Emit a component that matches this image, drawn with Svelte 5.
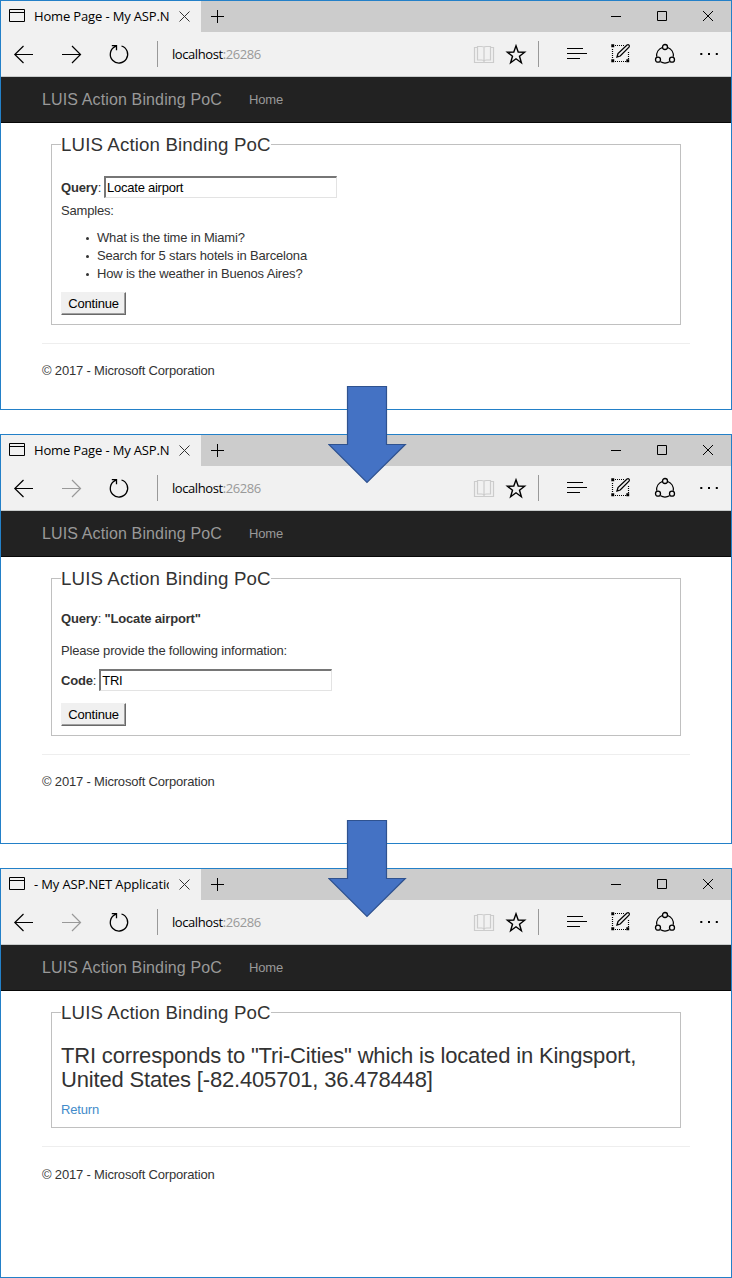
<script>
  const pages = [
    { title: 'Home Page - My ASP.N', kind: 'query', forward: true },
    { title: 'Home Page - My ASP.N', kind: 'code', forward: false },
    { title: '- My ASP.NET Application', kind: 'result', forward: false }
  ];
  const samples = [
    'What is the time in Miami?',
    'Search for 5 stars hotels in Barcelona',
    'How is the weather in Buenos Aires?'
  ];
</script>

<main>
  {#each pages as page, i}
    <section class="window">
      <div class="tabs">
        <div class="tab">
          <svg class="page-icon" width="16" height="13" viewBox="0 0 16 13"><path d="M.5.5h15v12H.5zM1 3.500h14" /></svg>
          <span class="title">{page.title}</span>
          <svg class="tab-close" width="11" height="11" viewBox="0 0 11 11"><path d="M.5.5l10 10M10.500.5l-10 10" /></svg>
        </div>
        <svg class="plus" width="13" height="13" viewBox="0 0 13 13"><path d="M6.500 0v13M0 6.500h13" /></svg>
        <div class="controls">
          <svg width="10" height="10" viewBox="0 0 10 10"><path d="M0 5.500h10" /></svg>
          <svg width="10" height="10" viewBox="0 0 10 10"><path d="M.5.5h9v9h-9z" /></svg>
          <svg width="10" height="10" viewBox="0 0 10 10"><path d="M0 0l10 10M10 0l-10 10" /></svg>
        </div>
      </div>

      <div class="toolbar">
        <svg class="icon" viewBox="0 0 24 24"><path d="M2.500 12.500H21M11.500 4l-8.700 8.500 8.700 8.500" /></svg>
        <svg class="icon forward" class:faded={!page.forward} viewBox="0 0 24 24"><path d="M2 12.500h18.500M12 4l8.500 8.500-8.500 8.500" /></svg>
        <svg class="icon refresh" viewBox="0 0 24 24"><path d="M14.500 4a8.700 8.700 0 1 1-6.500.6L9.500 3.600M4.800 3.600h4.700v4.700" /></svg>
        <i class="rule first"></i>
        <span class="url">localhost<em>:26286</em></span>
        <svg class="icon book" viewBox="0 0 24 24"><path d="M5.500 5.500H2.500v15h19v-15h-3M5.500 4.500h4q2.500 0 2.500 1.200 0-1.200 2.500-1.200h4v13.500h-4q-2.500 0-2.500 1.500 0-1.500-2.500-1.500h-4zM12 6v14" /></svg>
        <svg class="icon star" viewBox="0 0 24 24"><path d="M12 3.800l2.200 6.300 6.400.1-5.100 4 1.900 6.500-5.400-3.900-5.400 3.900 1.900-6.500-5.100-4 6.400-.1z" /></svg>
        <i class="rule second"></i>
        <svg class="icon hub" viewBox="0 0 24 24"><path d="M2 6.500h16M2 11.500h20M2 16.500h13" /></svg>
        <svg class="icon note" viewBox="0 0 24 24">
          <path class="dots" d="M6 3.500h9M3.500 7v10M6 19.500h11M19.500 10v7" />
          <path class="corners" d="M3 3h1.500v1.500H3zM3 18h1.500v1.500H3zM18 18h1.500v1.500H18z" />
          <path class="pen" d="M8 15l1-3.400 9-8.600q1.200-.8 2 .1t0 2L11.200 14z" />
        </svg>
        <svg class="icon share" viewBox="0 0 24 24">
          <path d="M9.300 5.500a8.800 8.800 0 0 0-5.600 9.200M14.700 5.500a8.800 8.800 0 0 1 5.600 9.200M7.500 19.800q4.500 2.500 9 0" />
          <circle cx="12" cy="5" r="2.500" /><circle cx="5" cy="17.700" r="2.500" /><circle cx="19" cy="17.700" r="2.500" />
        </svg>
        <svg class="icon more" viewBox="0 0 24 24"><path d="M3.300 12h2M11 12h2M18.800 12h2" /></svg>
      </div>

      <nav>
        <span class="brand">LUIS Action Binding PoC</span>
        <span class="home">Home</span>
      </nav>

      <div class="body">
        <fieldset>
          <legend>LUIS Action Binding PoC</legend>
          {#if page.kind === 'query'}
            <div class="field first-field"><span><b>Query</b>:</span><input value="Locate airport" /></div>
            <p class="samples">Samples:</p>
            <ul>
              {#each samples as s}<li>{s}</li>{/each}
            </ul>
            <button>Continue</button>
          {:else if page.kind === 'code'}
            <p class="asked"><b>Query</b>: <b>"Locate airport"</b></p>
            <p class="please">Please provide the following information:</p>
            <div class="field code-field"><span><b>Code</b>:</span><input value="TRI" /></div>
            <button class="lower">Continue</button>
          {:else}
            <h3>TRI corresponds to "Tri-Cities" which is located in Kingsport,<br />United States [-82.405701, 36.478448]</h3>
            <p class="return">Return</p>
          {/if}
        </fieldset>
        <hr />
        <footer class:last={page.kind === 'result'}>© 2017 - Microsoft Corporation</footer>
      </div>
      {#if i < 2}
        <svg class="arrow" width="80" height="98" viewBox="0 0 80 98"><path d="M19.500.5h39v58h18.800L39 96.500.8 58.500h18.700z" /></svg>
      {/if}
    </section>
  {/each}
</main>

<style>
  :global(body) { background: #fff; }
  main {
    width: 732px;
    display: flex;
    flex-direction: column;
    gap: 24px;
    font: 13px/18px "Liberation Sans", Arial, sans-serif;
    letter-spacing: -.18px;
    color: #333;
  }
  .window {
    position: relative;
    box-sizing: border-box;
    height: 410px;
    border: 1px solid #2380c8;
    background: #fff;
  }
  svg { fill: none; stroke: #000; stroke-width: 1; flex: none; display: block; }
  .tabs { display: flex; align-items: center; height: 31px; background: #ccc; }
  .tab {
    display: flex;
    align-items: center;
    box-sizing: border-box;
    width: 200px;
    height: 31px;
    padding: 0 0 1px 8px;
    background: #f1f1f1;
    color: #000;
    font: 13px/20px "Open Sans", "Noto Sans", sans-serif;
  }
  .page-icon { margin-right: 9px; margin-top: -1px; }
  .title { width: 135px; overflow: hidden; white-space: nowrap; letter-spacing: -.15px; margin-right: 10px; }
  .tab-close { stroke: #333; }
  .plus { margin-left: 10px; }
  .controls { display: flex; align-items: flex-start; height: 11px; gap: 36px; margin-left: auto; margin-right: 18px; }
  .controls svg { overflow: visible; }
  .toolbar {
    display: flex;
    align-items: center;
    box-sizing: border-box;
    height: 45px;
    padding: 0 10px 0 11px;
    background: #f1f1f1;
    border-bottom: 1px solid #c9cccc;
  }
  .icon { width: 24px; height: 24px; stroke-width: 1.2; }
  .forward { margin-left: 24px; }
  .faded { stroke: #999; }
  .refresh { margin-left: 23px; stroke-width: 1.3; }
  .rule { width: 1px; height: 26px; background: #999; }
  .first { margin-left: 26px; }
  .url { flex: 1; margin-left: 14px; color: #000; font: 13px/20px "Open Sans", "Noto Sans", sans-serif; letter-spacing: -.42px; }
  .url em { font-style: normal; color: #999; }
  .book { stroke: #ccc; }
  .star { margin-left: 8px; stroke-width: 1.4; }
  .second { margin-left: 10px; }
  .hub { margin-left: 26px; stroke-width: 1; }
  .note, .share, .more { margin-left: 20px; }
  .dots { stroke-dasharray: 1 1; }
  .corners { stroke-width: 1.4; }
  .pen { stroke-width: 1.3; }
  .share { stroke-width: 1.3; }
  .more { stroke-width: 2; }
  nav {
    display: flex;
    align-items: center;
    box-sizing: border-box;
    height: 46px;
    padding-left: 41px;
    background: #222;
    border-bottom: 1px solid #080808;
    color: #999;
  }
  .brand { font-size: 16px; width: 207px; white-space: nowrap; letter-spacing: .13px; }
  .body { padding: 9px 41px 0; }
  fieldset { margin: 0 9px; padding: 0 9px 9px; border: 1px solid #c0c0c0; min-width: 0; }
  legend { padding: 0; height: 25px; line-height: 25px; font-size: 18.700px; letter-spacing: .13px; }
  .field { display: flex; align-items: center; gap: 3px; height: 22px; }
  .field span { padding-top: 1px; }
  .first-field { margin-top: 19px; }
  input {
    box-sizing: border-box;
    width: 233px;
    height: 22px;
    margin: 0;
    padding: 0 1px;
    border: 2px solid;
    border-color: #767676 #e3e3e3 #e3e3e3 #767676;
    border-right-width: 1px;
    border-bottom-width: 1px;
    background: #fff;
    font: 13px "Liberation Sans", Arial, sans-serif;
    letter-spacing: -.25px;
    color: #000;
  }
  p { margin: 0; }
  .samples { margin-top: 4px; }
  ul { list-style: none; margin: 9px 0 9px; padding: 0 0 0 36px; }
  li { display: flex; align-items: center; }
  li::before { content: ""; width: 3px; height: 3px; border-radius: 50%; background: #333; margin-left: -11px; margin-right: 8px; }
  button {
    display: block;
    box-sizing: border-box;
    width: 65px;
    height: 23px;
    margin: 0;
    padding: 0;
    border: 1px solid;
    border-color: #f0f0f0 #696969 #696969 #f0f0f0;
    box-shadow: inset -1px -1px #a0a0a0;
    background: #f0f0f0;
    font: 13px "Liberation Sans", Arial, sans-serif;
    letter-spacing: -.18px;
    color: #000;
  }
  .asked { margin-top: 19px; }
  .please { margin: 14px 0 9px; }
  .code-field span { padding-top: 2px; }
  .lower { margin-top: 12px; }
  h3 { margin: 19px 0 9px; font-size: 22px; line-height: 24px; font-weight: 400; white-space: nowrap; letter-spacing: -.17px; }
  .return { color: #428bca; margin-bottom: -1px; }
  hr { height: 1px; border: 0; background: #eee; margin: 18px 0; }
  .last { padding-top: 1px; }
  .arrow { position: absolute; left: 327px; top: 385px; fill: #4472c4; stroke: #2f528f; stroke-width: 1.2; z-index: 2; }
</style>
